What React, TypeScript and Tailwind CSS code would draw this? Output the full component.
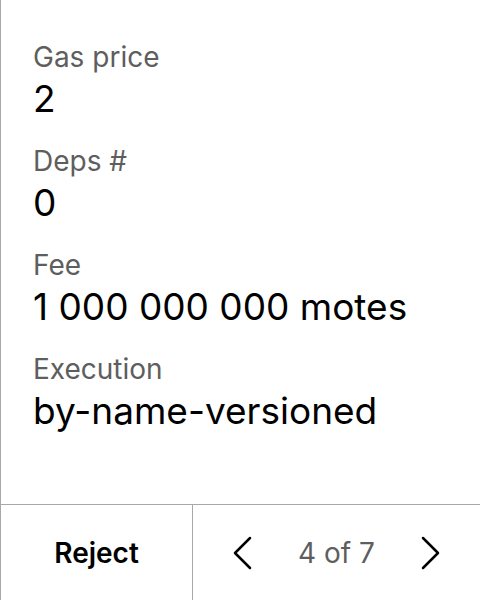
import React from "react";

const rows: [string, string][] = [
  ["Gas price", "2"],
  ["Deps #", "0"],
  ["Fee", "1 000 000 000 motes"],
  ["Execution", "by-name-versioned"],
];

export default function App() {
  return (
    <div
      className="w-[480px] h-[600px] flex flex-col bg-white border-l border-[#a8a8a8]"
      style={{ fontFamily: "Inter, 'Noto Sans', sans-serif" }}
    >
      <div className="flex-1 pl-[32px] pt-[37px] flex flex-col gap-[20px]">
        {rows.map(([label, value]) => (
          <div key={label} className="flex flex-col">
            <div className="text-[28px] leading-[40px] text-[#5e5e5e]">{label}</div>
            <div className="text-[37px] leading-[44px] text-black">{value}</div>
          </div>
        ))}
      </div>
      <div className="h-[96px] border-t border-[#a8a8a8] flex">
        <div className="w-[192px] border-r border-[#a8a8a8] flex items-center justify-center">
          <span className="text-[28px] font-semibold text-black">Reject</span>
        </div>
        <div className="flex-1 flex items-center justify-between px-[40px]">
          <svg width="20" height="34" viewBox="0 0 20 34" fill="none">
            <polyline points="17,2 2,17 17,32" stroke="black" strokeWidth="2.5" strokeLinecap="round" strokeLinejoin="round" />
          </svg>
          <span className="text-[28px] text-[#5e5e5e]">4 of 7</span>
          <svg width="20" height="34" viewBox="0 0 20 34" fill="none">
            <polyline points="3,2 18,17 3,32" stroke="black" strokeWidth="2.5" strokeLinecap="round" strokeLinejoin="round" />
          </svg>
        </div>
      </div>
    </div>
  );
}
